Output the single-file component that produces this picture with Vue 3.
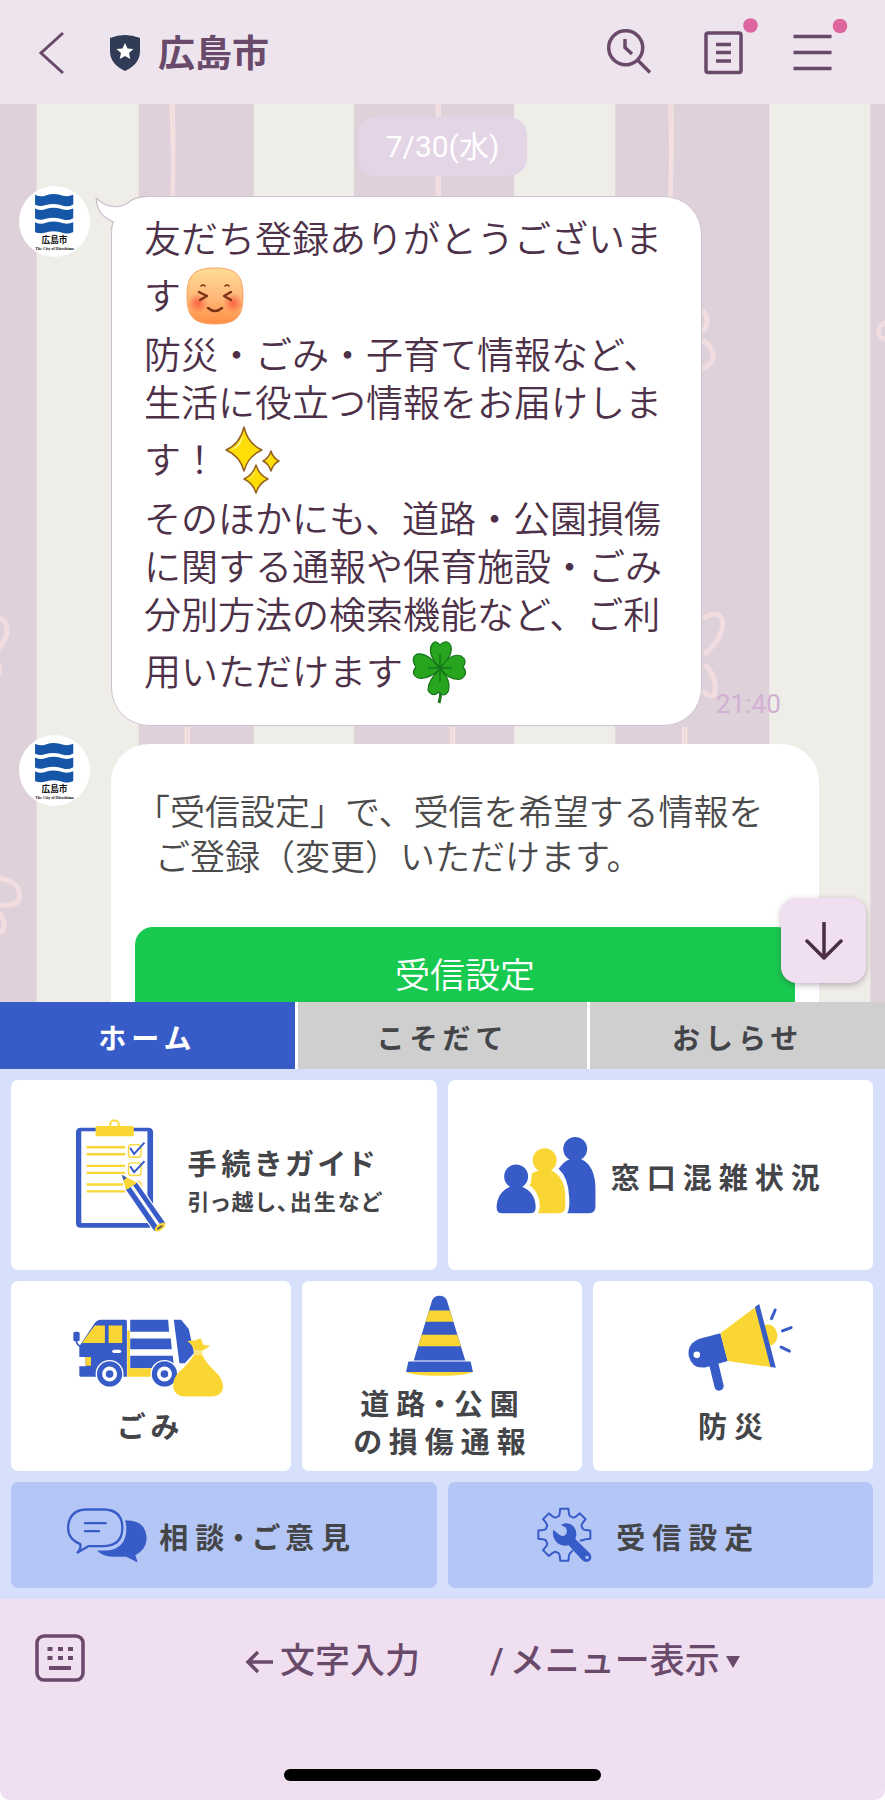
<script setup>
import { ref } from 'vue'

const tabs = ['ホーム', 'こそだて', 'おしらせ']
const activeTab = ref(0)

/* Stripes of the chat wallpaper: [x, width] */
const stripes = [[0, 37], [139, 115], [354, 160], [615, 154], [870, 15]]

/* Outline of the gear: seven teeth, left open where the wrench handle crosses */
function gearPath(cx, cy, outer, inner) {
  const point = (r, deg) => {
    const a = (deg * Math.PI) / 180
    return `${(cx + r * Math.cos(a)).toFixed(1)} ${(cy + r * Math.sin(a)).toFixed(1)}`
  }
  let d = `M${point(inner - 4, 64)}L${point(inner, 72)}`
  for (let t = 90; t <= 360; t += 45) {
    d += `L${point(inner, t - 17)}Q${point(inner + 4, t - 13)} ${point(inner + 8, t - 12)}`
    d += `L${point(outer, t - 9)}L${point(outer, t + 9)}L${point(inner + 8, t + 12)}`
    d += `Q${point(inner + 4, t + 13)} ${point(inner, t + 17)}`
  }
  return d + `L${point(inner - 6, 380)}`
}
const gear = gearPath(371, 799, 79, 58)
</script>

<template>
  <div class="app">
    <header class="header">
      <button class="icon-button back" aria-label="戻る">
        <svg width="27" height="44" viewBox="0 0 27 44"><path d="M25 2 3 22 25 42" fill="none" stroke="#6a4a6a" stroke-width="3" /></svg>
      </button>
      <svg class="shield" width="32" height="36" viewBox="0 0 32 36">
        <path d="M1 3Q16-3 31 3V16Q31 29 16 36 1 29 1 16Z" fill="#303c56" />
        <path d="m16 8 2.5 5.500 6 .6-4.500 4 1.300 5.900-5.300-3.100L10.700 24l1.300-5.900-4.500-4 6-.6Z" fill="#fff" />
      </svg>
      <h1>広島市</h1>
      <nav class="header-actions">
        <button class="icon-button" aria-label="検索">
          <svg width="50" height="50" viewBox="0 0 50 50" class="line">
            <circle cx="21.700" cy="19.700" r="17" /><path d="m33.500 32 12.500 12.500M21 11v8.500l7 6.500" />
          </svg>
        </button>
        <button class="icon-button" aria-label="ノート">
          <svg width="50" height="50" viewBox="0 0 50 50" class="line">
            <rect x="10" y="5" width="35" height="39.500" rx="2" /><path d="M20 16.500h15M20 24.500h15M20 33h15" />
            <circle cx="54.500" cy="-2.500" r="7.300" class="dot" />
          </svg>
        </button>
        <button class="icon-button" aria-label="メニュー">
          <svg width="50" height="50" viewBox="0 0 50 50" class="line">
            <path d="M5.500 8.500H43.500M5.500 24.500H43.500M5.500 40.500H43.500" />
            <circle cx="52" cy="-2" r="7.300" class="dot" />
          </svg>
        </button>
      </nav>
    </header>

    <main class="chat">
      <svg class="wallpaper" viewBox="0 0 885 897" preserveAspectRatio="xMidYMin slice" aria-hidden="true">
        <rect width="885" height="897" fill="#efede8" />
        <rect v-for="s in stripes" :key="s[0]" :x="s[0]" y="0" :width="s[1]" height="897" fill="#dfd1da" />
        <g fill="none" stroke="#f3dfe0" stroke-width="2.500">
          <path d="M171 0Q173 50 172 93M174 0Q175 50 174 93M437 0V93M440 0V93M669 0Q671 50 669 93M672 0Q673 50 671 93" />
          <path d="M186 622V640M189 622V640M451 622V640M454 622V640M683 622V640M686 622V640" />
        </g>
        <g fill="none" stroke="#f1dcdf" stroke-width="5">
          <path d="M702 206Q711 214 703 228M702 236Q716 244 712 256 709 262 702 264" />
          <circle cx="886" cy="227" r="8" />
          <path d="M703 514Q718 504 722 516 724 532 704 550M704 560Q718 572 714 590 708 594 703 586" />
          <path d="M-3 512Q10 516 7 530 4 540-3 546M-3 556Q3 564-3 574" />
          <path d="M-3 773Q20 776 20 790 20 800 8 800H-3M-2 806Q8 818 3 826L-3 828" />
        </g>
      </svg>

      <time class="date">7/30(水)</time>

      <div class="row">
        <svg class="avatar" width="71" height="71" viewBox="57 20 212 212" role="img" aria-label="広島市">
          <circle cx="163" cy="126" r="106" fill="#fff" />
          <g fill="#1656a8">
            <path d="M105 46Q121 54 137 48 163 40 189 49 204 53 219 46V75Q204 84 189 79 163 69 137 77 121 83 105 76Z" />
            <path d="M105 87Q121 95 137 89 163 81 189 90 204 94 219 87V116Q204 125 189 120 163 110 137 118 121 124 105 117Z" />
            <path d="M105 128Q121 136 137 130 163 122 189 131 204 135 219 128V157Q204 165 189 160 163 151 137 159 121 164 105 158Z" />
          </g>
          <text x="163" y="191" text-anchor="middle" class="avatar-name">広島市</text>
          <text x="163" y="211" text-anchor="middle" class="avatar-sub">The City of Hiroshima</text>
        </svg>
        <div class="bubble">
          <svg class="tail" width="50" height="34" viewBox="288 48 150 102">
            <path d="M292 55Q315 78 345 80 370 81 385 70 403 52 438 51V150H338L342 125Q292 105 292 55Z" fill="#fff" />
            <path d="M438 50Q403 52 385 70 370 81 345 80 315 78 292 55 292 105 342 125L337 150" fill="none" stroke="#cfc2d0" stroke-width="4" />
          </svg>
          <p>友だち登録ありがとうございま<br />す<svg class="emoji" width="68" height="68" viewBox="0 3 68 68" role="img" aria-label="笑顔">
              <defs>
                <linearGradient id="skin" x1="0" y1="0" x2="0" y2="1"><stop offset="0" stop-color="#ffdc95" /><stop offset=".55" stop-color="#ffb777" /><stop offset="1" stop-color="#ff8f45" /></linearGradient>
                <radialGradient id="cheek"><stop offset="0" stop-color="#f9553a" stop-opacity=".85" /><stop offset="1" stop-color="#f9553a" stop-opacity="0" /></radialGradient>
              </defs>
              <path d="M34 6C55 6 62 13 62 34S55 62 34 62 6 55 6 34 13 6 34 6Z" fill="url(#skin)" stroke="#f6a468" />
              <circle cx="17" cy="41" r="10" fill="url(#cheek)" /><circle cx="52" cy="41" r="10" fill="url(#cheek)" />
              <g fill="none" stroke="#7b3315" stroke-width="2.500" stroke-linecap="round" stroke-linejoin="round">
                <path d="m18 30 8 4-7 4M50 30l-7 4 7 4M27 46q7 6 14 0" /><path d="M20 24q2-2 4 0M44 24q2-2 4 0" stroke-width="1.500" />
              </g>
            </svg><br />防災・ごみ・子育て情報など、<br />生活に役立つ情報をお届けしま<br />す！<svg class="emoji" width="68" height="68" viewBox="0 3 68 68" role="img" aria-label="きらきら">
              <g fill="#ffdd08" stroke="#94601f" stroke-width="1.500" stroke-linejoin="round">
                <path d="M26 1Q30 18 44 24 30 30 26 45 22 30 8 24 22 18 26 1ZM53 25Q55 32 61 35 55 38 53 45 51 38 45 35 51 32 53 25ZM38 39Q41 49 50 53 41 57 38 67 35 57 26 53 35 49 38 39Z" />
              </g>
              <g fill="#fff8ae"><path d="M25 8Q22 20 12 24 24 22 25 8ZM52 29Q51 33 48 35 52 34 52 29ZM37 44Q35 51 29 53 37 51 37 44Z" /></g>
            </svg><br />そのほかにも、道路・公園損傷<br />に関する通報や保育施設・ごみ<br />分別方法の検索機能など、ご利<br />用いただけます<svg class="emoji" width="68" height="68" viewBox="-3 3 68 68" role="img" aria-label="四つ葉のクローバー">
              <path d="M34 38Q36 56 33 65" fill="none" stroke="#1b751a" stroke-width="3" />
              <g fill="#27a51f" stroke="#17741a" stroke-width="1.200">
                <path d="M34 30Q22 18 25 8 29 0 34 7 41 0 45 8 47 18 34 30Z" />
                <path d="M34 31Q22 42 12 40 4 36 10 29 4 20 11 16 22 14 34 31Z" />
                <path d="M34 31Q44 14 55 18 62 22 57 29 63 36 55 41 44 43 34 31Z" />
                <path d="M34 31Q46 42 42 54 38 60 33 54 26 60 22 52 22 42 34 31Z" />
              </g>
              <path d="M34 16V44M22 30H46M29 25 39 36" fill="none" stroke="#17741a" stroke-width="1.500" />
            </svg></p>
        </div>
        <time class="time">21:40</time>
      </div>

      <div class="row">
        <svg class="avatar" width="71" height="71" viewBox="57 20 212 212" role="img" aria-label="広島市">
          <circle cx="163" cy="126" r="106" fill="#fff" />
          <g fill="#1656a8">
            <path d="M105 46Q121 54 137 48 163 40 189 49 204 53 219 46V75Q204 84 189 79 163 69 137 77 121 83 105 76Z" />
            <path d="M105 87Q121 95 137 89 163 81 189 90 204 94 219 87V116Q204 125 189 120 163 110 137 118 121 124 105 117Z" />
            <path d="M105 128Q121 136 137 130 163 122 189 131 204 135 219 128V157Q204 165 189 160 163 151 137 159 121 164 105 158Z" />
          </g>
          <text x="163" y="191" text-anchor="middle" class="avatar-name">広島市</text>
          <text x="163" y="211" text-anchor="middle" class="avatar-sub">The City of Hiroshima</text>
        </svg>
        <div class="card">
          <p><span>「受信設定」で、受信を希望する情報を</span><span class="indent">ご登録（変更）いただけます。</span></p>
          <button class="card-button">受信設定</button>
        </div>
      </div>

      <button class="scroll-down" aria-label="最新のメッセージへ">
        <svg width="38" height="38" viewBox="0 0 38 38"><path d="M19 1V36M2 19 19 36 36 19" fill="none" stroke="#4a2e46" stroke-width="3.500" stroke-linecap="round" stroke-linejoin="round" /></svg>
      </button>
    </main>

    <section class="menu">
      <div class="tabs" role="tablist">
        <button v-for="(tab, i) in tabs" :key="tab" role="tab" :aria-selected="i === activeTab" :class="['tab', { active: i === activeTab }]" @click="activeTab = i">{{ tab }}</button>
      </div>
      <div class="tiles">
        <button class="tile half guide">
          <svg width="91" height="113" viewBox="228 150 272 340">
            <rect x="230" y="176" width="232" height="301" rx="13" fill="#375cc8" />
            <rect x="246" y="187" width="199" height="276" fill="#fff" />
            <circle cx="346" cy="167" r="13" fill="#fff" stroke="#fad634" stroke-width="6" />
            <rect x="289" y="171" width="115" height="31" rx="4" fill="#fad634" />
            <path d="M262 235H378M262 256H378M262 291H378M262 312H378M262 347H378M262 368H378" stroke="#fad634" stroke-width="7" />
            <g fill="none" stroke="#fad634" stroke-width="4"><rect x="388" y="227" width="38" height="38" rx="9" /><rect x="388" y="282" width="38" height="38" rx="9" /><rect x="388" y="338" width="38" height="38" rx="9" /></g>
            <path d="m393 237 12 18 31-34M393 292l12 18 31-33" fill="none" stroke="#375cc8" stroke-width="6" />
            <path d="m365 314 52 24 86 128-38 25-91-129Z" fill="#fff" />
            <path d="m380 362 33-21 86 123-33 23Z" fill="#375cc8" />
            <path d="m368 318 45 23q-6 9-16 10-5 10-17 11Z" fill="#fad634" />
            <path d="m368 318 15 8-10 9Z" fill="#375cc8" />
            <path d="m398 352 85 123" stroke="#fff" stroke-width="9" />
            <ellipse cx="483" cy="475" rx="19" ry="9" transform="rotate(-36 483 475)" fill="#fad634" />
            <path d="m475 481 15-10" stroke="#555" stroke-width="5" />
          </svg>
          <span class="stack">
            <span class="label palt">手続きガイド</span>
            <span class="sub palt">引っ越し、出生など</span>
          </span>
        </button>
        <button class="tile half people">
          <svg width="100" height="77" viewBox="166 202 300 232">
            <g fill="#375cc8">
              <circle cx="404" cy="238" r="36" />
              <path d="M354 298Q370 276 386 270 404 262 422 269 465 288 465 360V412Q464 432 443 432H380Q388 418 386 385 384 325 354 298Z" />
              <circle cx="226" cy="321" r="36" />
              <path d="M208 352Q226 344 244 352 283 368 285 412 285 432 268 432H184Q167 432 167 412 170 368 208 352Z" />
            </g>
            <g fill="#fad634">
              <circle cx="312" cy="272" r="36" />
              <path d="M266 347Q272 345 273 312 283 308 292 304 312 297 332 303 374 322 374 385V412Q374 432 352 432H292Q300 415 296 395 290 363 266 347Z" />
            </g>
          </svg>
          <span class="label">窓口混雑状況</span>
        </button>
        <button class="tile third">
          <svg width="151" height="78" viewBox="220 148 454 234">
            <g fill="#375cc8">
              <rect x="221" y="186" width="19" height="29" rx="5" />
              <path d="M230 212Q230 228 246 231" fill="none" stroke="#375cc8" stroke-width="5" />
              <path d="M304 150H378Q382 150 382 155V321H243Q239 321 239 316V290H258V262H239V230L284 162Q292 150 304 150Z" />
              <path d="M392 150H506L509 186H392ZM392 206H514L517 239H392ZM392 258H520L524 296H392ZM523 150H545L568 178 584 250 556 281H540Z" />
            </g>
            <g fill="#fad634"><path d="M285 167H316V220H247ZM327 167H368V220H327ZM258 262H274V288H258ZM383 182H391V296H465V321H383Z" /></g>
            <rect x="338" y="240" width="27" height="10" rx="5" fill="#fff" />
            <g fill="#375cc8" stroke="#fff" stroke-width="4"><circle cx="330" cy="313" r="40" /><circle cx="495" cy="313" r="40" /></g>
            <g fill="#375cc8" stroke="#fff" stroke-width="11"><circle cx="330" cy="313" r="17" /><circle cx="495" cy="313" r="17" /></g>
            <path d="M583 256H609Q620 280 645 303 671 326 671 350 670 380 635 381H560Q524 380 521 352 520 326 538 308 570 280 583 256ZM564 214 590 212Q598 204 606 209L611 225 633 228 609 243H584Q580 226 564 214Z" fill="#fad634" />
            <path d="M583 250H609" stroke="#fbe37a" stroke-width="11" />
          </svg>
          <span class="label palt">ごみ</span>
        </button>
        <button class="tile third cone">
          <svg width="67" height="81" viewBox="1215 74 200 242">
            <path d="M1238 270 1293 90Q1298 76 1315 76T1337 90L1392 270ZM1222 273H1408L1415 304H1215Z" fill="#375cc8" />
            <path d="M1284 120H1346L1357 154H1273ZM1262 193H1368L1379 227H1251ZM1215 304H1415Q1395 315 1315 315T1215 304Z" fill="#fad634" />
          </svg>
          <span class="label palt">道路・公園<br />の損傷通報</span>
        </button>
        <button class="tile third mega">
          <svg width="120" height="87" viewBox="694 103 360 262" overflow="visible">
            <path d="m823 288 15 62" stroke="#375cc8" stroke-width="28" stroke-linecap="round" />
            <path d="M842 191 864 275 802 293Q758 302 747 260 740 222 782 207Z" fill="#375cc8" />
            <circle cx="771" cy="256" r="10" fill="#fff" />
            <path d="M842 191 948 112 994 293 864 275ZM974 166Q1003 158 1013 190 1018 220 990 230Z" fill="#fad634" />
            <path d="M946 112 959 103 1009 295 993 293Z" fill="#375cc8" />
            <path d="m996 147 11-26M1029 184l26-10M1025 233l25 12" stroke="#375cc8" stroke-width="9" stroke-linecap="round" />
          </svg>
          <span class="label">防災</span>
        </button>
        <button class="tile half soft talk">
          <svg width="80" height="55" viewBox="204 714 240 164">
            <path d="M260 718H316Q370 720 370 773T316 828H268L236 847Q247 834 244 822 207 808 207 773 210 720 260 718ZM258 759H320M258 783H300" fill="none" stroke="#375cc8" stroke-width="7" stroke-linecap="round" stroke-linejoin="round" />
            <path d="M378 751Q440 748 443 805 442 838 409 855L416 877 382 860H340Q310 858 294 841H325Q382 835 382 775 382 760 378 751Z" fill="#375cc8" />
          </svg>
          <span class="label palt">相談・ご意見</span>
        </button>
        <button class="tile half soft settings">
          <svg width="55" height="56" viewBox="289 716 165 168">
            <path :d="gear" fill="none" stroke="#375cc8" stroke-width="6" stroke-linejoin="round" stroke-linecap="round" />
            <path d="M361 770Q373 761 390 768 408 778 407 800L404 812 449 856Q456 869 447 877 436 885 425 876L384 831Q357 836 343 816 334 802 338 784L354 798Q366 808 375 799 383 788 374 777Z" fill="#375cc8" />
            <circle cx="439" cy="867" r="5" fill="#b4c6f5" />
          </svg>
          <span class="label">受信設定</span>
        </button>
      </div>
    </section>

    <footer class="footer">
      <div class="bar">
        <button class="icon-button" aria-label="キーボード">
          <svg width="50" height="48" viewBox="0 0 50 48">
            <rect x="2" y="2" width="46" height="44" rx="7" fill="none" stroke="#6a4a6a" stroke-width="3.500" />
            <path d="M12.500 15h5M23 15h5M33 15h5M12.500 24h5M23 24h5M33 24h5" stroke="#6a4a6a" stroke-width="4" /><path d="M14 34H36" stroke="#6a4a6a" stroke-width="4" />
          </svg>
        </button>
        <button class="hint input-hint">
          <svg width="28" height="24" viewBox="0 0 28 24"><path d="M28 12H3M13 2 3 12 13 22" fill="none" stroke="#6a4a6a" stroke-width="3.500" /></svg>文字入力
        </button>
        <button class="hint menu-hint">
          <span>/</span>メニュー表示<svg width="14" height="12" viewBox="0 0 14 12"><path d="M0 0H14L7 12Z" fill="#6a4a6a" /></svg>
        </button>
      </div>
      <div class="home-indicator"></div>
    </footer>
  </div>
</template>

<style>
body {
  margin: 0;
  background: #fff;
}
</style>

<style scoped>
.app {
  display: flex;
  flex-direction: column;
  height: 100vh;
  overflow: hidden;
  color: #4d3148;
  font-family: Roboto, "Noto Sans CJK JP", sans-serif;
}
button {
  padding: 0;
  border: 0;
  background: none;
  color: inherit;
  font: inherit;
  cursor: pointer;
}
p, h1 {
  margin: 0;
}
.icon-button {
  display: flex;
}
.header {
  display: flex;
  align-items: center;
  height: 104px;
  padding: 2px 47px 0 38px;
  box-sizing: border-box;
  background: #eee4ed;
}
.shield {
  margin-left: 44px;
}
h1 {
  margin-left: 17px;
  padding-top: 4px;
  color: #6a4a6a;
  font-size: 37px;
  font-weight: 600;
  line-height: 48px;
}
.header-actions {
  display: flex;
  gap: 42px;
  margin-left: auto;
}
.line {
  overflow: visible;
  fill: none;
  stroke: #6a4a6a;
  stroke-width: 3.5px;
}
.dot {
  fill: #dc669d;
  stroke: none;
}
.chat {
  position: relative;
  flex: 1;
  min-height: 0;
  overflow: hidden;
}
.wallpaper {
  position: absolute;
  inset: 0;
  width: 100%;
  height: 100%;
}
.date {
  position: relative;
  display: block;
  width: max-content;
  margin: 13px auto 10px;
  padding: 0 28px;
  border-radius: 18px;
  background: #e3d5e5;
  color: #fff;
  font-size: 30px;
  line-height: 59px;
}
.row {
  position: relative;
  display: flex;
  align-items: flex-start;
  margin: 0 66px 9px 19px;
}
.avatar {
  flex: none;
  margin-right: 21px;
}
.avatar-name {
  font: 700 26px "Noto Sans CJK JP", sans-serif;
  fill: #111;
}
.avatar-sub {
  font: 700 12px "Liberation Serif", serif;
  fill: #111;
}
.bubble {
  position: relative;
  margin-top: 10px;
  padding: 20px 39px 16px 32px;
  border: 1px solid #cfc2d0;
  border-radius: 38px;
  background: #fff;
  font-size: 37px;
  font-weight: 350;
  line-height: 48px;
  white-space: nowrap;
}
.tail {
  position: absolute;
  left: -17px;
  top: -1px;
}
.emoji {
  overflow: visible;
  vertical-align: -23px;
}
.time {
  align-self: flex-end;
  margin-left: 14px;
  padding-bottom: 6px;
  color: #d3b0d3;
  font-size: 26px;
  line-height: 32px;
}
.card {
  flex: 1;
  margin-top: 9px;
  padding: 47px 24px 24px;
  border-radius: 38px;
  background: #fff;
  color: #4b4b4b;
  font-size: 35px;
  font-weight: 350;
  line-height: 45px;
}
.card p {
  white-space: nowrap;
}
.card span {
  display: block;
}
.card .indent {
  padding-left: 20px;
}
.card-button {
  width: 100%;
  height: 98px;
  margin-top: 46px;
  border-radius: 18px;
  background: #18c94f;
  color: #fff;
}
.scroll-down {
  position: absolute;
  right: 19px;
  bottom: 19px;
  display: flex;
  align-items: center;
  justify-content: center;
  width: 85px;
  height: 85px;
  border-radius: 16px;
  background: #f0dff0;
  box-shadow: 0 2px 6px rgba(70, 40, 70, 0.35);
}
.tabs {
  display: grid;
  grid-template-columns: 295fr 290fr 295fr;
  gap: 3px;
  background: #fff;
}
.tab {
  height: 67px;
  padding-top: 2px;
  background: #cfcfcf;
  font-size: 28px;
  font-weight: 600;
  letter-spacing: 5px;
}
.tab.active {
  background: #375cc8;
  color: #fff;
}
.menu {
  color: #444549;
}
.label {
  margin-right: -7px;
  font-size: 29px;
  font-weight: 600;
  line-height: 38px;
  letter-spacing: 7px;
}
.palt {
  font-feature-settings: "palt";
}
.tiles {
  display: grid;
  grid-template-columns: repeat(6, 1fr);
  grid-template-rows: 190px 190px 106px;
  gap: 11px;
  padding: 11px 12px 11px 11px;
  background: #d7e0fa;
}
.tile {
  display: flex;
  align-items: center;
  justify-content: center;
  border-radius: 7px;
  background: #fff;
}
.half {
  grid-column: span 3;
  gap: 22px;
}
.half .label {
  padding-top: 8px;
}
.guide {
  padding-left: 10px;
}
.guide .label {
  letter-spacing: 5px;
}
.people {
  gap: 15px;
  padding-right: 5px;
}
.stack {
  display: flex;
  flex-direction: column;
  align-items: flex-start;
  padding-top: 10px;
}
.sub {
  font-size: 22px;
  font-weight: 600;
  line-height: 38px;
  letter-spacing: 2px;
}
.third {
  grid-column: span 2;
  flex-direction: column;
  justify-content: flex-end;
  gap: 12px;
  box-sizing: border-box;
  padding: 0 5px 24px 0;
}
.mega {
  gap: 18px;
}
.cone {
  gap: 10px;
  padding-bottom: 9px;
}
.soft {
  box-sizing: border-box;
  padding-right: 30px;
  background: #b4c6f5;
}
.talk {
  gap: 12px;
}
.settings {
  gap: 24px;
}
.footer {
  box-sizing: border-box;
  height: 201px;
  padding: 35px 35px 19px;
  display: flex;
  flex-direction: column;
  align-items: center;
  justify-content: space-between;
  border-radius: 0 0 10px 10px;
  background: #f0dff0;
}
.bar {
  display: flex;
  align-items: flex-start;
  width: 100%;
}
.hint {
  display: flex;
  align-items: center;
  padding-top: 4px;
  color: #6a4a6a;
  font-size: 35px;
  font-weight: 500;
  line-height: 48px;
  white-space: nowrap;
}
.input-hint {
  gap: 7px;
  margin-left: 160px;
}
.menu-hint {
  gap: 6px;
  margin-left: 70px;
}
.home-indicator {
  width: 39%;
  height: 12px;
  border-radius: 6px;
  background: #000;
}
</style>
